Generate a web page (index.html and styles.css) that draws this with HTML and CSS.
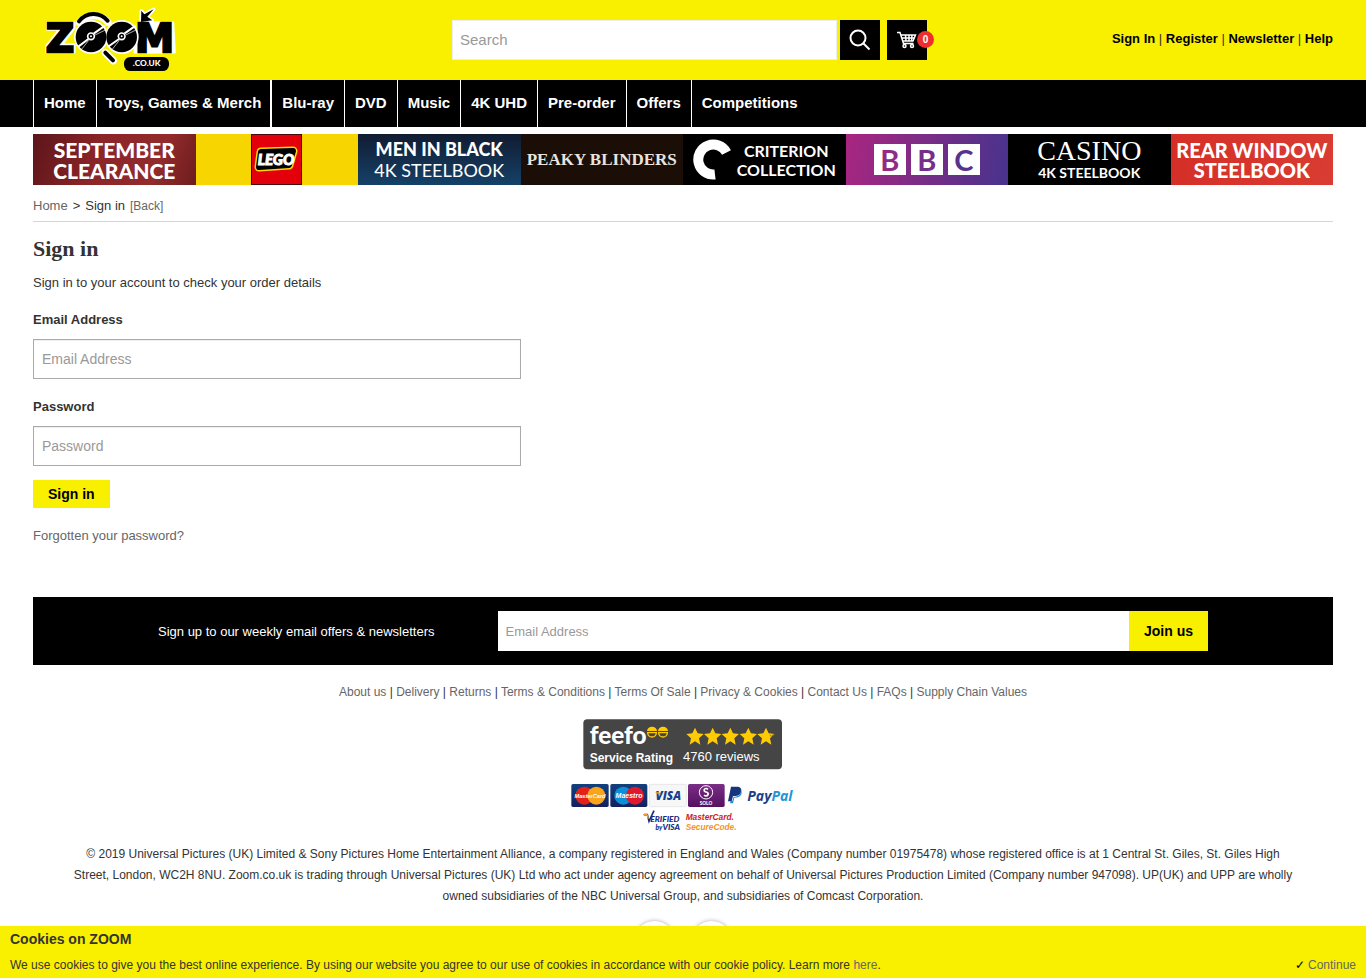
FILE: index.html
```html
<!DOCTYPE html>
<html lang="en">
<head>
<meta charset="utf-8">
<meta name="viewport" content="width=device-width, initial-scale=1">
<title>Sign in | ZOOM.co.uk</title>
<link rel="stylesheet" href="styles.css">
</head>
<body>
<header class="header">
  <div class="wrap header-grid">
    <a class="logo" href="#" aria-label="Zoom.co.uk">
      <svg width="167" height="80" viewBox="9 0 501 240">
        <g stroke="#fff" stroke-linejoin="round" stroke-linecap="round" fill="none">
          <path d="M149 68a54 54 0 0 1 84 -2M226 158l24 24" stroke-width="22"/>
          <path d="M333 66l1-34 9 11 28-15-19 22 15 11z" stroke-width="10" fill="#fff"/>
        </g>
        <path d="M52 67h81v18l-38 49h38v23H49v-19l39-49H52zM326 67h103l5 90H314z" fill="#fff" stroke="#fff" stroke-width="7" stroke-linejoin="round"/>
        <path d="M351 160l4-44 19 44zM391 160l17-44 4 44z" fill="#fff"/>
        <text class="logo-letter" x="47" y="155">Z</text>
        <text class="logo-letter" x="315" y="155">M</text>
        <path d="M147 64a54 54 0 0 1 86 -2M226 158l23 23" stroke="#000" stroke-width="12" stroke-linecap="round" fill="none"/>
        <circle cx="183" cy="111" r="51" fill="#fff"/>
        <circle cx="275" cy="111" r="51" fill="#fff"/>
        <circle cx="183" cy="111" r="46"/>
        <circle cx="275" cy="111" r="46"/>
        <g stroke="#fff" fill="none">
          <path d="M175 117l-30 23M191 101l34-24M267 117l-34 24M283 101l34-24" stroke-width="6"/>
          <path d="M176 121l-22 28M195 105l31-15M268 121l-22 28M287 105l31-15" stroke-width="2"/>
          <circle cx="183" cy="109" r="10" stroke-width="5" fill="#000"/>
          <circle cx="275" cy="109" r="10" stroke-width="5" fill="#000"/>
        </g>
        <circle cx="183" cy="109" r="3" fill="#fff"/>
        <circle cx="275" cy="109" r="3" fill="#fff"/>
        <path d="M333 66l1-34 9 11 28-15-19 22 15 11z"/>
        <rect x="282" y="171" width="135" height="42" rx="19"/>
        <text class="logo-domain" x="350" y="199" text-anchor="middle">.CO.UK</text>
      </svg>
    </a>
    <form class="search">
      <input class="search-input" type="text" placeholder="Search" aria-label="Search">
      <button class="square" type="button" aria-label="Search">
        <svg width="24" height="24" viewBox="0 0 24 24" fill="none" stroke="#fff" stroke-width="2"><circle cx="10" cy="10" r="7.500"/><path d="M15.500 15.500l6 6"/></svg>
      </button>
      <a class="square cart" href="#" aria-label="Basket, 0 items">
        <svg width="20" height="18" viewBox="0 0 20 18" fill="none" stroke="#fff" stroke-width="1.500"><path d="M0 1.500h3l3.500 11h10M4 4h14.500l-2.500 6H6M5 7h12.500M8.500 4l.5 6M12 4v6M15 4l-.5 6"/><circle cx="7.500" cy="15" r="1.500"/><circle cx="15" cy="15" r="1.500"/></svg>
        <span class="badge">0</span>
      </a>
    </form>
    <div class="account"><a href="#">Sign In</a> | <a href="#">Register</a> | <a href="#">Newsletter</a> | <a href="#">Help</a></div>
  </div>
</header>
<nav class="nav">
  <div class="wrap nav-list">
    <a href="#">Home</a><a class="wide" href="#">Toys, Games &amp; Merch</a><a href="#">Blu-ray</a><a href="#">DVD</a><a href="#">Music</a><a href="#">4K UHD</a><a href="#">Pre-order</a><a href="#">Offers</a><a href="#">Competitions</a>
  </div>
</nav>
<main class="wrap">
  <div class="promos">
    <a class="promo september" href="#"><span>SEPTEMBER</span><span>CLEARANCE</span></a>
    <a class="promo lego" href="#">
      <svg width="51" height="51" viewBox="0 0 51 51"><rect x=".5" y=".5" width="50" height="50" fill="#e3000b" stroke="#4a0808"/><path d="M10 18l32-1-4 14-30 2z" stroke="#ffd900" stroke-width="9" stroke-linejoin="round"/><path d="M10 18l32-1-4 14-30 2z" stroke="#000" stroke-width="6" stroke-linejoin="round"/><text class="lego-text" x="25" y="31" text-anchor="middle">LEGO</text></svg>
    </a>
    <a class="promo mib" href="#"><span>MEN IN BLACK</span><span class="regular">4K STEELBOOK</span></a>
    <a class="promo peaky" href="#"><span>PEAKY BLINDERS</span></a>
    <a class="promo criterion" href="#">
      <svg width="39" height="42" viewBox="0 0 39 42"><path d="M33.500 13.500A15 15 0 1 0 22 35.500" fill="none" stroke="#fff" stroke-width="10"/></svg>
      <span class="criterion-text"><span>CRITERION</span><span>COLLECTION</span></span>
    </a>
    <a class="promo bbc" href="#"><span class="block b1">B</span><span class="block b2">B</span><span class="block b3">C</span></a>
    <a class="promo casino" href="#"><span class="casino-title">CASINO</span><span>4K STEELBOOK</span></a>
    <a class="promo rear" href="#"><span>REAR WINDOW</span><span>STEELBOOK</span></a>
  </div>
  <div class="crumbs"><a href="#">Home</a><span>&gt;</span><span>Sign in</span><a class="back" href="#">[Back]</a></div>
  <h1>Sign in</h1>
  <p class="intro">Sign in to your account to check your order details</p>
  <form class="signin">
    <label for="email">Email Address</label>
    <input id="email" type="email" placeholder="Email Address">
    <label for="password">Password</label>
    <input id="password" type="password" placeholder="Password">
    <button class="button" type="button">Sign in</button>
    <a class="forgot" href="#">Forgotten your password?</a>
  </form>
</main>
<footer class="wrap footer">
  <form class="signup">
    <label for="news">Sign up to our weekly email offers &amp; newsletters</label>
    <input id="news" type="email" placeholder="Email Address">
    <button class="button join" type="button">Join us</button>
  </form>
  <div class="links"><a href="#">About us</a> | <a href="#">Delivery</a> | <a href="#">Returns</a> | <a href="#">Terms &amp; Conditions</a> | <a href="#">Terms Of Sale</a> | <a href="#">Privacy &amp; Cookies</a> | <a href="#">Contact Us</a> | <a href="#">FAQs</a> | <a href="#">Supply Chain Values</a></div>
  <a class="feefo" href="#">
    <svg width="200" height="51" viewBox="69 27 600 153">
      <rect x="70" y="28" width="596" height="150" rx="12" fill="#454545"/>
      <text class="feefo-name" x="89" y="103">feefo</text>
      <path d="M261 63a15 13 0 0 1 30 0zM294 63a15 13 0 0 1 30 0z" fill="#ffcb05"/>
      <path d="M263 68h26a13 13 0 0 1-26 0zM296 68h26a13 13 0 0 1-26 0z" fill="none" stroke="#ffcb05" stroke-width="4"/>
      <g fill="#ffcb05"><path id="star" d="M405 53l8 17 18 2-14 13 4 19-16-10-16 10 4-19-14-13 18-2z"/><use href="#star" x="53"/><use href="#star" x="106"/><use href="#star" x="160"/><use href="#star" x="213"/></g>
      <path d="M629 75l5 4 7-7" stroke="#454545" stroke-width="2" fill="none"/>
      <text class="feefo-label" x="89" y="155">Service Rating</text>
      <text class="feefo-count" x="369" y="153">4760 reviews</text>
    </svg>
  </a>
  <svg class="payments" width="227" height="49" viewBox="30 220 681 147" role="img" aria-label="Accepted payments">
    <defs>
      <linearGradient id="navy" x2="0" y2="1"><stop stop-color="#12417d"/><stop offset="1" stop-color="#14205f"/></linearGradient>
      <linearGradient id="solo" x2="0" y2="1"><stop stop-color="#7a2e86"/><stop offset="1" stop-color="#551160"/></linearGradient>
    </defs>
    <rect x="34" y="223" width="112" height="69" rx="5" fill="url(#navy)"/>
    <circle cx="73" cy="258" r="27" fill="#e32119"/><circle cx="109" cy="258" r="27" fill="#f8a51b"/>
    <text class="card-name" x="90" y="264" text-anchor="middle">MasterCard</text>
    <rect x="151" y="223" width="111" height="69" rx="5" fill="url(#navy)"/>
    <circle cx="190" cy="258" r="27" fill="#0a8fd8"/><circle cx="225" cy="258" r="27" fill="#e0182d"/>
    <text class="card-name maestro" x="207" y="264" text-anchor="middle">Maestro</text>
    <rect x="268" y="224" width="111" height="67" rx="5" fill="#f7f7f8" stroke="#dedee2" stroke-width="2"/>
    <text class="visa" x="325" y="272" text-anchor="middle">VISA</text>
    <path d="M284 248h14l4 9z" fill="#f0a022"/>
    <rect x="384" y="223" width="110" height="69" rx="5" fill="url(#solo)"/>
    <circle cx="438" cy="248" r="20" fill="none" stroke="#fff" stroke-width="3"/><path d="M444 239c-10-8-17 6-6 8 13 3 5 16-6 10" fill="none" stroke="#fff" stroke-width="5"/>
    <text class="solo" x="438" y="285" text-anchor="middle">SOLO</text>
    <path d="M513 231h21c15 0 14 27-7 28h-8l-4 16h-11z" fill="#17347c"/><path d="M542 240c9 14-4 25-19 24l-4 17h-9l2-7h5l4-13c15 0 23-7 21-21z" fill="#1b91d4"/>
    <text class="paypal" x="562" y="274"><tspan fill="#1f3f86">Pay</tspan><tspan fill="#2594d5">Pal</tspan></text>
    <path d="M252 315h10l5 20 15-32" stroke="#1b2a7c" stroke-width="5" fill="none"/><path d="M249 315h12l4 12" stroke="#f2a22c" stroke-width="4" fill="none"/>
    <text class="verified" x="271" y="336">ERIFIED</text>
    <text class="verified" x="360" y="360" text-anchor="end"><tspan class="by">by</tspan>VISA</text>
    <text class="secure red" x="377" y="332">MasterCard.</text>
    <text class="secure orange" x="377" y="360">SecureCode.</text>
  </svg>
  <p class="legal">© 2019 Universal Pictures (UK) Limited &amp; Sony Pictures Home Entertainment Alliance, a company registered in England and Wales (Company number 01975478) whose registered office is at 1 Central St. Giles, St. Giles High Street, London, WC2H 8NU. Zoom.co.uk is trading through Universal Pictures (UK) Ltd who act under agency agreement on behalf of Universal Pictures Production Limited (Company number 947098). UP(UK) and UPP are wholly owned subsidiaries of the NBC Universal Group, and subsidiaries of Comcast Corporation.</p>
  <div class="social"><span></span><span></span></div>
</footer>
<aside class="cookies">
  <strong>Cookies on ZOOM</strong>
  <div class="cookie-row"><span>We use cookies to give you the best online experience. By using our website you agree to our use of cookies in accordance with our cookie policy. Learn more <a href="#">here</a>.</span><a href="#"><span class="tick">✓</span> Continue</a></div>
</aside>
</body>
</html>
```
FILE: styles.css
```css
* { box-sizing: border-box; }
body { margin: 0; background: #fff; color: #333; font: 13px/21px "Liberation Sans", Arial, sans-serif; }
a { color: #666; text-decoration: none; }
svg { display: block; }
input, button { font-family: inherit; border-radius: 0; margin: 0; }
input::placeholder { color: #999; opacity: 1; }
.wrap { margin: 0 33px; }

.header { background: #f9f000; }
.header-grid { display: grid; grid-template-columns: 419fr 475fr 406fr; align-items: center; height: 80px; }
.logo-letter { font: bold 118px "DejaVu Sans", sans-serif; fill: #000; stroke: #000; stroke-width: 7px; }
.logo-domain { font: 900 25px Lato, sans-serif; fill: #fff; }
.search { display: flex; }
.search-input { flex: 1; min-width: 0; height: 40px; border: 1px solid #eee; background: #fff; padding: 0 7px 2px; font-size: 15px; margin-right: 3px; }
.square { width: 40px; height: 40px; padding: 0; border: 0; background: #000; display: flex; align-items: center; justify-content: center; }
.cart { position: relative; margin-left: 7px; }
.badge { position: absolute; right: -7px; top: 11px; width: 17px; height: 17px; border-radius: 50%; background: #ee2e2e; color: #fff; font-weight: bold; font-size: 10px; line-height: 17px; text-align: center; }
.account { text-align: right; padding-bottom: 3px; }
.account a { color: #000; font-weight: bold; }

.nav { background: #000; }
.nav-list { display: flex; }
.nav-list a { border-left: 1px solid #fff; padding: 0 10px 2px; font-size: 15px; line-height: 45px; font-weight: bold; color: #fff; }
.nav-list .wide { border-right: 1px solid #fff; padding-left: 9px; padding-right: 9px; }

.promos { display: grid; grid-template-columns: repeat(8, 1fr); margin-top: 7px; height: 51px; }
.promo { display: flex; flex-direction: column; align-items: center; justify-content: center; min-width: 0; overflow: hidden; white-space: nowrap; color: #fff; font-family: Lato, sans-serif; font-weight: 900; }
.september { background: linear-gradient(110deg, #5c1519, #8b2528 40%, #922b2c 75%, #6d1c1e); font-size: 21px; line-height: 21px; }
.lego { background: #f6d500; }
.lego-text { font: italic 900 15px Lato, sans-serif; fill: #fff; stroke: #fff; }
.mib { background: linear-gradient(#111c31, #154168); font-size: 18px; line-height: 21px; }
.regular { font-weight: 400; }
.peaky { background: #1a0e06; color: #e8e4de; font: bold 17px "Liberation Serif", serif; }
.criterion { background: #000; flex-direction: row; gap: 5px; font-size: 16px; line-height: 19px; font-weight: 700; }
.criterion-text { display: flex; flex-direction: column; align-items: center; }
.bbc { background: linear-gradient(100deg, #a92680, #47338d); flex-direction: row; gap: 5px; }
.block { width: 32px; height: 31px; background: #fff; font-size: 29px; line-height: 31px; text-align: center; font-weight: 700; }
.b1 { color: #912b86; }
.b2 { color: #762f89; }
.b3 { color: #59328c; }
.casino { background: #000; font-size: 14px; line-height: 17px; font-weight: 700; }
.casino-title { font: 28px/26px "Liberation Serif", serif; }
.rear { background: linear-gradient(100deg, #d52f27, #d93c32); font-size: 20px; line-height: 20px; }

.crumbs { display: flex; align-items: baseline; gap: 5px; padding: 10px 0 4px; border-bottom: 1px solid #d5d5d5; }
.back { font-size: 12px; }
h1 { margin: 13px 0 10px; font: bold 22px/27px "Liberation Serif", "Times New Roman", serif; }
.intro { margin: 0 0 16px; }
.signin { display: flex; flex-direction: column; align-items: flex-start; }
.signin label { font-weight: bold; margin-bottom: 9px; }
.signin input { width: 100%; max-width: 488px; height: 40px; border: 1px solid #aaa; padding: 0 8px; font-size: 14px; margin-bottom: 17px; box-shadow: inset 0 1px 1px #eee; }
.signin #password { margin-bottom: 14px; }
.button { border: 0; background: #f9f000; color: #000; font-weight: bold; font-size: 14px; height: 28px; padding: 0 15px; }
.forgot { margin: 17px 0 51px; }

.footer { display: flex; flex-direction: column; align-items: center; }
.signup { align-self: stretch; display: flex; align-items: center; background: #000; color: #fff; padding: 14px 125px; }
.signup input { flex: 1; min-width: 0; height: 40px; border: 0; padding: 0 8px; font-size: 13px; margin-left: 63px; }
.signup .join { height: 40px; }
.links { margin-top: 17px; font-size: 12px; }
.feefo { margin-top: 16px; }
.feefo-name { font: 900 73px Lato, sans-serif; fill: #fff; }
.feefo-label { font: bold 36px "Liberation Sans", sans-serif; fill: #fff; }
.feefo-count { font: 39px "Liberation Sans", sans-serif; fill: #fff; }
.payments { margin-top: 13px; }
.card-name { font: italic bold 17px "Liberation Sans", sans-serif; fill: #fff; }
.maestro { font-size: 21px; }
.visa { font: italic 900 35px "Open Sans", sans-serif; fill: #17418c; }
.solo { font: 900 14px Lato, sans-serif; fill: #fff; }
.paypal { font: italic bold 42px "Open Sans", sans-serif; }
.verified { font: italic 900 25px Lato, sans-serif; fill: #1b2a7c; }
.by { font-size: 20px; }
.secure { font: italic bold 25px "Liberation Sans", sans-serif; }
.red { fill: #cf1722; }
.orange { fill: #f5931f; }
.legal { margin: 12px 37px 0; text-align: center; font-size: 12px; }
.social { display: flex; gap: 16px; margin-top: 14px; }
.social span { width: 41px; height: 41px; border-radius: 50%; background: #fff; box-shadow: 0 0 4px #aaa; }

.cookies { position: fixed; left: 0; right: 0; bottom: 0; background: #f9f000; padding: 3px 10px 2px; font-size: 12px; }
.cookies strong { display: block; font-size: 14px; line-height: 21px; margin-bottom: 5px; }
.cookie-row { display: flex; justify-content: space-between; }
.tick { color: #000; }
```
